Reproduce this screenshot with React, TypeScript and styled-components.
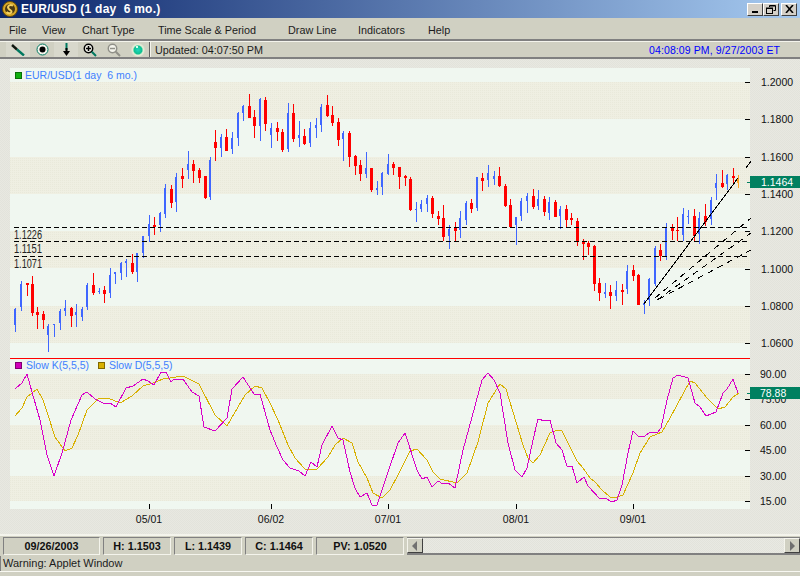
import styled, { createGlobalStyle } from "styled-components";

const GlobalStyle = createGlobalStyle`
  html, body {
    margin: 0;
    padding: 0;
    background: #d0d0c2;
  }
`;

const FACE = "#d0d0c2";
const UI_FONT = `"Liberation Sans", Arial, sans-serif`;

const Window = styled.div`
  width: 800px;
  height: 576px;
  display: flex;
  flex-direction: column;
  overflow: hidden;
  background: ${FACE};
  font-family: ${UI_FONT};
  color: #1c1c1c;
`;

const TitleBar = styled.div`
  height: 18px;
  flex: none;
  display: flex;
  align-items: center;
  padding: 0 3px 0 2px;
  background: linear-gradient(90deg, #0a246a 0%, #a6caf0 100%);
`;

const Title = styled.span`
  margin-left: 3px;
  flex: 1;
  color: #fff;
  font-size: 12px;
  font-weight: 700;
  white-space: pre;
  letter-spacing: 0.25px;
`;

const WinButton = styled.button<{ $gap?: number }>`
  width: 16px;
  height: 13px;
  padding: 0;
  margin-left: ${(p) => p.$gap ?? 0}px;
  display: flex;
  align-items: center;
  justify-content: center;
  background: #d4d0c8;
  border: 1px solid;
  border-color: #fff #404040 #404040 #fff;
`;

const MenuBar = styled.div`
  height: 23px;
  flex: none;
  display: grid;
  grid-template-columns: 33px 40px 76px 130px 70px 70px auto;
  align-items: center;
  padding: 2px 0 0 9px;
  box-sizing: border-box;
  border-bottom: 2px solid #808080;
  font-size: 10.8px;
`;

const MenuItem = styled.span`
  white-space: nowrap;
`;

const ToolBar = styled.div`
  height: 18px;
  flex: none;
  box-sizing: border-box;
  display: flex;
  align-items: center;
  padding-left: 6px;
  border-top: 1px solid #f4f4ec;
  border-bottom: 2px solid #808080;
`;

const ToolButton = styled.span<{ $lit?: boolean }>`
  width: 24px;
  height: 15px;
  display: flex;
  align-items: center;
  justify-content: center;
  background: ${(p) => (p.$lit ? "#d8d8cc" : "transparent")};
`;

const ToolSep = styled.span`
  width: 1px;
  height: 15px;
  margin-left: -1px;
  background: #606060;
  border-right: 1px solid #f4f4ec;
`;

const Updated = styled.span`
  margin-left: 4px;
  font-size: 10.8px;
  flex: 1;
`;

const Clock = styled.span`
  margin-right: 20px;
  font-size: 10.5px;
  color: #0000ff;
  letter-spacing: 0.1px;
`;

const ChartPanel = styled.div`
  height: 477px;
  flex: none;
  box-sizing: border-box;
  background: repeating-conic-gradient(#e2e3db 0 25%, #e8e8e1 0 50%) 0 0 / 2px 2px;
  border-bottom: 2px solid #f4f4ec;
`;

const ChartSvg = styled.svg`
  display: block;
`;

const AxisText = styled.text`
  font-family: ${UI_FONT};
  font-size: 10.5px;
  fill: #111;
`;

const LegendText = styled.text`
  font-family: ${UI_FONT};
  font-size: 10.5px;
  fill: #3f80ff;
  white-space: pre;
`;

const LevelText = styled.text`
  font-family: ${UI_FONT};
  font-size: 13px;
  font-weight: 300;
  fill: #222;
`;

const TagText = styled.text`
  font-family: ${UI_FONT};
  font-size: 10.5px;
  fill: #fff;
`;

const StatusRow = styled.div`
  height: 20px;
  flex: none;
  box-sizing: border-box;
  display: flex;
  align-items: stretch;
  gap: 3px;
  padding: 1px 0 1px 3px;
`;

const Cell = styled.div<{ $w: number }>`
  width: ${(p) => p.$w}px;
  box-sizing: border-box;
  display: flex;
  align-items: center;
  justify-content: center;
  font-size: 10.8px;
  font-weight: 700;
  color: #111;
  border: 1px solid;
  border-color: #808080 #f4f4ec #f4f4ec #808080;
`;

const ScrollBar = styled.div`
  flex: 1;
  display: flex;
  box-sizing: border-box;
  border-top: 1px solid #808080;
  border-bottom: 2px solid #808080;
  background: repeating-conic-gradient(#e2e3db 0 25%, #e9e9e3 0 50%) 0 0 / 2px 2px;
`;

const ScrollTrack = styled.div`
  flex: 1;
`;

const ScrollButton = styled.div`
  width: 14px;
  display: flex;
  align-items: center;
  justify-content: center;
  background: ${FACE};
  border: 1px solid;
  border-color: #f4f4ec #404040 #404040 #f4f4ec;
`;

const WarningRow = styled.div`
  height: 15px;
  flex: none;
  padding-left: 2px;
  font-size: 11px;
  line-height: 15px;
  border-left: 1px solid #808080;
`;

const BottomEdge = styled.div`
  height: 5px;
  flex: none;
  box-sizing: border-box;
  border-top: 1px solid #f8f8f2;
`;

type Bar = [number, number, number, number, number];

// x, high y, low y, body top y, body bottom y (pixels on the 800x576 picture)
const BLUE_BARS: Bar[] = [
  [15, 308, 332, 309, 325], [21, 281, 311, 284, 307], [48, 324, 352, 326, 335], [54, 324, 337, 324, 325],
  [60, 309, 330, 311, 323], [65, 300, 316, 308, 311], [76, 304, 327, 312, 315], [82, 307, 321, 309, 317],
  [87, 283, 310, 285, 307], [99, 288, 294, 291, 292], [110, 268, 298, 275, 293], [115, 272, 284, 272, 274],
  [121, 262, 280, 263, 273], [126, 259, 277, 261, 263], [137, 253, 282, 253, 272], [143, 236, 258, 236, 253],
  [149, 215, 242, 224, 236], [160, 212, 232, 213, 225], [165, 184, 218, 188, 214], [176, 173, 212, 177, 202],
  [188, 151, 179, 164, 170], [210, 157, 200, 160, 197], [221, 134, 157, 137, 148], [232, 132, 154, 138, 149],
  [238, 112, 146, 113, 138], [243, 105, 121, 106, 113], [260, 98, 141, 99, 126], [271, 123, 148, 128, 135],
  [288, 103, 152, 113, 149], [299, 121, 147, 135, 138], [310, 122, 147, 128, 143], [316, 118, 138, 125, 128],
  [321, 104, 132, 107, 125], [343, 131, 161, 133, 139], [366, 152, 178, 168, 174], [377, 181, 195, 188, 190],
  [382, 172, 195, 173, 187], [388, 154, 175, 164, 174], [416, 202, 222, 209, 210], [421, 200, 212, 204, 209],
  [427, 195, 212, 198, 204], [449, 225, 249, 229, 236], [460, 211, 238, 218, 230], [466, 201, 225, 203, 220],
  [477, 177, 211, 177, 208], [488, 165, 187, 173, 180], [494, 171, 185, 176, 179], [516, 217, 245, 217, 225],
  [521, 198, 221, 201, 216], [527, 193, 213, 196, 201], [538, 190, 210, 199, 206], [549, 197, 220, 202, 213],
  [560, 206, 229, 209, 216], [605, 283, 298, 292, 294], [616, 281, 301, 290, 296], [627, 265, 294, 271, 289],
  [644, 300, 314, 303, 305], [649, 278, 306, 279, 300], [655, 246, 286, 248, 284], [666, 223, 260, 227, 256],
  [683, 208, 241, 214, 235], [688, 210, 224, 216, 217], [699, 212, 244, 218, 234], [711, 197, 225, 200, 219],
  [716, 174, 200, 183, 188], [727, 174, 190, 175, 184],
];

const RED_BARS: Bar[] = [
  [27, 283, 296, 283, 285], [32, 276, 316, 284, 313], [37, 307, 329, 312, 315], [43, 311, 329, 314, 320],
  [71, 307, 327, 308, 316], [93, 273, 295, 285, 293], [104, 286, 303, 290, 294], [132, 254, 274, 263, 272],
  [154, 217, 235, 225, 227], [171, 185, 208, 189, 203], [182, 168, 188, 176, 179], [193, 160, 183, 164, 171],
  [199, 168, 183, 170, 178], [205, 176, 199, 176, 198], [215, 130, 161, 142, 148], [226, 129, 151, 137, 151],
  [249, 94, 118, 106, 118], [254, 110, 138, 117, 126], [265, 97, 131, 100, 124], [277, 122, 141, 128, 132],
  [282, 129, 152, 132, 150], [293, 104, 142, 113, 139], [304, 129, 145, 136, 144], [327, 95, 117, 105, 116],
  [332, 106, 126, 115, 123], [338, 118, 146, 122, 140], [349, 131, 167, 133, 157], [355, 155, 175, 156, 166],
  [360, 160, 181, 165, 174], [371, 168, 192, 168, 190], [393, 162, 175, 164, 168], [399, 167, 189, 167, 177],
  [405, 175, 186, 176, 178], [410, 177, 211, 179, 210], [432, 196, 218, 198, 214], [438, 211, 225, 216, 219],
  [443, 205, 241, 218, 237], [455, 222, 241, 228, 231], [471, 199, 213, 203, 209], [482, 173, 191, 178, 181],
  [499, 167, 187, 176, 186], [505, 184, 207, 186, 206], [510, 199, 227, 205, 227], [533, 189, 209, 196, 207],
  [544, 196, 216, 199, 212], [555, 200, 217, 202, 217], [566, 205, 227, 209, 220], [571, 213, 225, 218, 220],
  [577, 218, 246, 221, 241], [583, 239, 260, 241, 244], [588, 241, 255, 243, 247], [594, 245, 291, 246, 284],
  [599, 278, 301, 283, 293], [610, 285, 309, 292, 296], [622, 284, 305, 290, 292], [633, 265, 281, 270, 276],
  [638, 274, 305, 275, 305], [660, 244, 261, 250, 256], [672, 224, 240, 227, 231], [677, 217, 241, 230, 231],
  [694, 209, 241, 216, 236], [705, 204, 226, 216, 222], [722, 170, 188, 183, 187], [733, 168, 183, 176, 178],
];

const SLOW_K =
  "15,389 22,383 27,374 32,392 40,420 47,455 54,476 62,453 71,420 82,395 87,392 95,399 105,404 110,403 116,407 126,388 133,386 143,379 148,381 154,385 161,372 166,372 171,382 174,379 183,379 192,392 199,396 204,427 215,431 227,418 232,389 243,377 254,394 260,394 " +
  "270,430 277,447 283,460 290,468 299,471 305,476 311,462 317,467 322,445 332,426 338,438 343,440 350,472 355,488 360,497 367,493 372,505 377,505 388,472 398,443 405,433 417,470 422,479 427,477 432,487 438,481 443,484 448,483 455,488 463,450 472,417 482,380 488,373 494,380 500,393 508,443 515,470 522,477 527,468 533,440 538,419 " +
  "545,421 550,420 556,443 562,450 567,466 572,466 577,483 584,477 588,486 600,499 605,498 612,502 617,500 622,485 628,453 633,431 639,437 645,436 650,432 658,432 661,428 667,400 673,378 678,375 688,378 695,403 700,407 706,416 716,412 723,393 727,389 733,379 738,393";

const SLOW_D =
  "15,416 22,408 27,397 37,389 43,400 48,415 55,437 65,451 72,448 78,435 87,410 98,399 108,398 120,403 132,396 143,386 153,383 163,379 183,376 199,384 215,415 227,426 238,407 245,395 255,386 262,388 270,403 " +
  "278,420 288,445 295,458 305,469 317,469 328,457 335,445 343,438 352,443 358,462 367,478 373,493 382,498 390,490 398,475 410,451 417,449 427,460 433,472 440,479 457,483 467,473 478,442 488,403 500,384 506,389 513,412 523,445 528,458 " +
  "530,460 533,463 540,455 550,433 557,430 562,431 568,443 577,461 583,468 590,478 595,482 602,490 610,497 617,497 623,495 633,473 640,453 650,437 662,432 670,418 690,381 695,383 707,398 718,409 725,407 733,397 739,393";

const PRICE_BANDS: [number, number][] = [[82, 119], [157, 194], [231, 268], [306, 343]];
const STOCH_BANDS: [number, number][] = [[374, 399], [425, 450], [476, 501]];
const PRICE_LABELS: [string, number][] = [
  ["1.2000", 82], ["1.1800", 119], ["1.1600", 157], ["1.1400", 194],
  ["1.1200", 231], ["1.1000", 269], ["1.0800", 306], ["1.0600", 343],
];
const STOCH_LABELS: [string, number][] = [
  ["90.00", 374], ["75.00", 399], ["60.00", 425], ["45.00", 450], ["30.00", 476], ["15.00", 501],
];
const DATES: [string, number][] = [["05/01", 149], ["06/02", 271], ["07/01", 388], ["08/01", 516], ["09/01", 633]];
const LEVELS: [string, number][] = [["1.1226", 227], ["1.1151", 241], ["1.1071", 256]];
const FAN: [number, number, number, number][] = [
  [655, 298, 751, 218],
  [657, 300, 751, 233],
  [659, 299, 751, 250],
];

const Candles = ({ bars, color, left, width }: { bars: Bar[]; color: string; left: number; width: number }) => (
  <g fill={color}>
    {bars.map(([x, hi, lo, top, bot]) => (
      <g key={x}>
        <rect x={x} y={hi} width={1} height={lo - hi} />
        <rect x={x + left} y={top} width={width} height={Math.max(bot - top, 1)} />
      </g>
    ))}
  </g>
);

const Chart = () => (
  <ChartSvg width={800} height={475} viewBox="0 59 800 475" shapeRendering="crispEdges">
    <defs>
      <pattern id="beige" width={2} height={2} patternUnits="userSpaceOnUse">
        <rect width={2} height={2} fill="#efefe2" />
        <rect width={1} height={1} fill="#e9e9da" />
      </pattern>
    </defs>

    <rect x={10} y={68} width={740} height={441} fill="#f0f7f0" />
    {[...PRICE_BANDS, ...STOCH_BANDS].map(([a, b]) => (
      <rect key={a} x={10} y={a} width={740} height={b - a} fill="url(#beige)" />
    ))}
    <rect x={10} y={358} width={740} height={1} fill="#ff0000" />

    <Candles bars={BLUE_BARS} color="#3f66ff" left={-1} width={2} />
    <Candles bars={RED_BARS} color="#ff0000" left={-1} width={3} />
    <Candles bars={[[738, 175, 188, 178, 183]]} color="#ffa020" left={-1} width={2} />

    {LEVELS.map(([text, y]) => (
      <g key={text}>
        <line x1={14} x2={750} y1={y + 0.5} y2={y + 0.5} stroke="#000" strokeDasharray="5 3" />
        <LevelText x={14} y={y + 12} textLength={28} lengthAdjust="spacingAndGlyphs">
          {text}
        </LevelText>
      </g>
    ))}

    <line x1={644} y1={304} x2={738} y2={178} stroke="#000" />
    <line x1={746} y1={168} x2={751} y2={161} stroke="#000" />
    {FAN.map(([x1, y1, x2, y2]) => (
      <line key={y2} x1={x1} y1={y1} x2={x2} y2={y2} stroke="#000" strokeDasharray="6 5" />
    ))}

    <polyline points={SLOW_D} fill="none" stroke="#d8b000" />
    <polyline points={SLOW_K} fill="none" stroke="#d800c8" />

    <rect x={15} y={72} width={6} height={6} fill="#10b010" stroke="#087008" />
    <LegendText x={25} y={79}>EUR/USD(1 day  6 mo.)</LegendText>
    <rect x={15} y={362} width={6} height={6} fill="#d000b8" stroke="#800070" />
    <LegendText x={26} y={369}>Slow K(5,5,5)</LegendText>
    <rect x={98} y={362} width={6} height={6} fill="#d8b000" stroke="#806800" />
    <LegendText x={109} y={369}>Slow D(5,5,5)</LegendText>

    {[...PRICE_LABELS, ...STOCH_LABELS].map(([text, y]) => (
      <g key={text}>
        <rect x={745} y={y} width={5} height={1} fill="#000" />
        <AxisText x={text.length > 5 ? 761 : 760} y={y + 4}>
          {text}
        </AxisText>
      </g>
    ))}
    {DATES.map(([text, x]) => (
      <g key={text}>
        <rect x={x} y={504} width={1} height={5} fill="#000" />
        <AxisText x={x} y={523} textAnchor="middle">
          {text}
        </AxisText>
      </g>
    ))}

    <rect x={750} y={176} width={50} height={12} fill="#008060" />
    <rect x={747} y={182} width={3} height={1} fill="#008060" />
    <TagText x={761} y={186}>1.1464</TagText>
    <rect x={750} y={387} width={50} height={12} fill="#008060" />
    <rect x={747} y={393} width={3} height={1} fill="#008060" />
    <TagText x={760} y={397}>78.88</TagText>
  </ChartSvg>
);

const Logo = () => (
  <svg width={16} height={16} viewBox="0 0 16 16">
    <circle cx={8} cy={8} r={7.5} fill="#d8a828" stroke="#604808" />
    <circle cx={8} cy={8} r={5} fill="#4a3a14" />
    <path d="M11 4.5C8 3 5 5 6.5 7.5S10 9 9.5 11 6 12.5 4.5 11" fill="none" stroke="#f4d060" strokeWidth={2} />
  </svg>
);

const Magnifier = ({ color, handle, plus }: { color: string; handle: string; plus?: boolean }) => (
  <svg width={14} height={14} viewBox="0 0 14 14">
    <circle cx={5.5} cy={5.5} r={4.2} fill="#f4f4ec" stroke={color} strokeWidth={1.5} />
    <path d="M3 5.5H8" stroke={color} strokeWidth={1.5} />
    {plus && <path d="M5.5 3V8" stroke={color} strokeWidth={1.5} />}
    <path d="M8.8 8.8L13 13" stroke={handle} strokeWidth={2} />
  </svg>
);

export default function App() {
  return (
    <>
      <GlobalStyle />
      <Window>
        <TitleBar>
          <Logo />
          <Title>EUR/USD (1 day  6 mo.)</Title>
          <WinButton>
            <svg width={8} height={8} viewBox="0 0 8 8">
              <rect x={1} y={6} width={6} height={2} fill="#000" />
            </svg>
          </WinButton>
          <WinButton>
            <svg width={10} height={9} viewBox="0 0 10 9" fill="none" stroke="#000">
              <path d="M3.5 2V.5H9.5V5.5H7.5" />
              <rect x={.5} y={3} width={6} height={5.5} />
              <path d="M1 3.5H6M4 1H9" />
            </svg>
          </WinButton>
          <WinButton $gap={2}>
            <svg width={9} height={8} viewBox="0 0 9 8">
              <path d="M1 0L8 8M8 0L1 8" stroke="#000" strokeWidth={1.6} />
            </svg>
          </WinButton>
        </TitleBar>

        <MenuBar>
          <MenuItem>File</MenuItem>
          <MenuItem>View</MenuItem>
          <MenuItem>Chart Type</MenuItem>
          <MenuItem>Time Scale &amp; Period</MenuItem>
          <MenuItem>Draw Line</MenuItem>
          <MenuItem>Indicators</MenuItem>
          <MenuItem>Help</MenuItem>
        </MenuBar>

        <ToolBar>
          <ToolButton $lit>
            <svg width={14} height={12} viewBox="0 0 14 12">
              <path d="M1 1L6 5.5" stroke="#101810" strokeWidth={2.4} />
              <path d="M6 5.5L13 11.5" stroke="#007860" strokeWidth={2.4} />
            </svg>
          </ToolButton>
          <ToolButton>
            <svg width={13} height={13} viewBox="0 0 13 13">
              <circle cx={6.5} cy={6.5} r={5.5} fill="#f4f4ec" stroke="#007860" />
              <circle cx={6.5} cy={6.5} r={3} fill="#000" />
            </svg>
          </ToolButton>
          <ToolButton $lit>
            <svg width={9} height={13} viewBox="0 0 9 13">
              <path d="M4.5 0V7" stroke="#007860" strokeWidth={2} />
              <path d="M4.5 5V10" stroke="#000" strokeWidth={2} />
              <path d="M1 8H8L4.5 13Z" fill="#000" />
            </svg>
          </ToolButton>
          <ToolButton>
            <Magnifier color="#000" handle="#007860" plus />
          </ToolButton>
          <ToolButton>
            <Magnifier color="#909088" handle="#909088" />
          </ToolButton>
          <ToolButton>
            <svg width={14} height={14} viewBox="0 0 14 14">
              <defs>
                <radialGradient id="lamp" cx="50%" cy="50%" r="50%">
                  <stop offset="0%" stopColor="#20d8c0" />
                  <stop offset="55%" stopColor="#10c090" />
                  <stop offset="75%" stopColor="#e8f0d8" />
                  <stop offset="100%" stopColor="#d8d8c8" />
                </radialGradient>
              </defs>
              <circle cx={7} cy={7} r={7} fill="url(#lamp)" />
              <rect x={5} y={3} width={2} height={2} fill="#d8fff0" />
            </svg>
          </ToolButton>
          <ToolSep />
          <Updated>Updated: 04:07:50 PM</Updated>
          <Clock>04:08:09 PM, 9/27/2003 ET</Clock>
        </ToolBar>

        <ChartPanel>
          <Chart />
        </ChartPanel>

        <StatusRow>
          <Cell $w={97}>09/26/2003</Cell>
          <Cell $w={68}>H: 1.1503</Cell>
          <Cell $w={68}>L: 1.1439</Cell>
          <Cell $w={68}>C: 1.1464</Cell>
          <Cell $w={88}>PV: 1.0520</Cell>
          <ScrollBar>
            <ScrollButton>
              <svg width={6} height={10} viewBox="0 0 6 10">
                <path d="M5 0V10L0 5Z" fill="#707070" />
              </svg>
            </ScrollButton>
            <ScrollTrack />
            <ScrollButton>
              <svg width={6} height={10} viewBox="0 0 6 10">
                <path d="M1 0V10L6 5Z" fill="#707070" />
              </svg>
            </ScrollButton>
          </ScrollBar>
        </StatusRow>

        <WarningRow>Warning: Applet Window</WarningRow>
        <BottomEdge />
      </Window>
    </>
  );
}
